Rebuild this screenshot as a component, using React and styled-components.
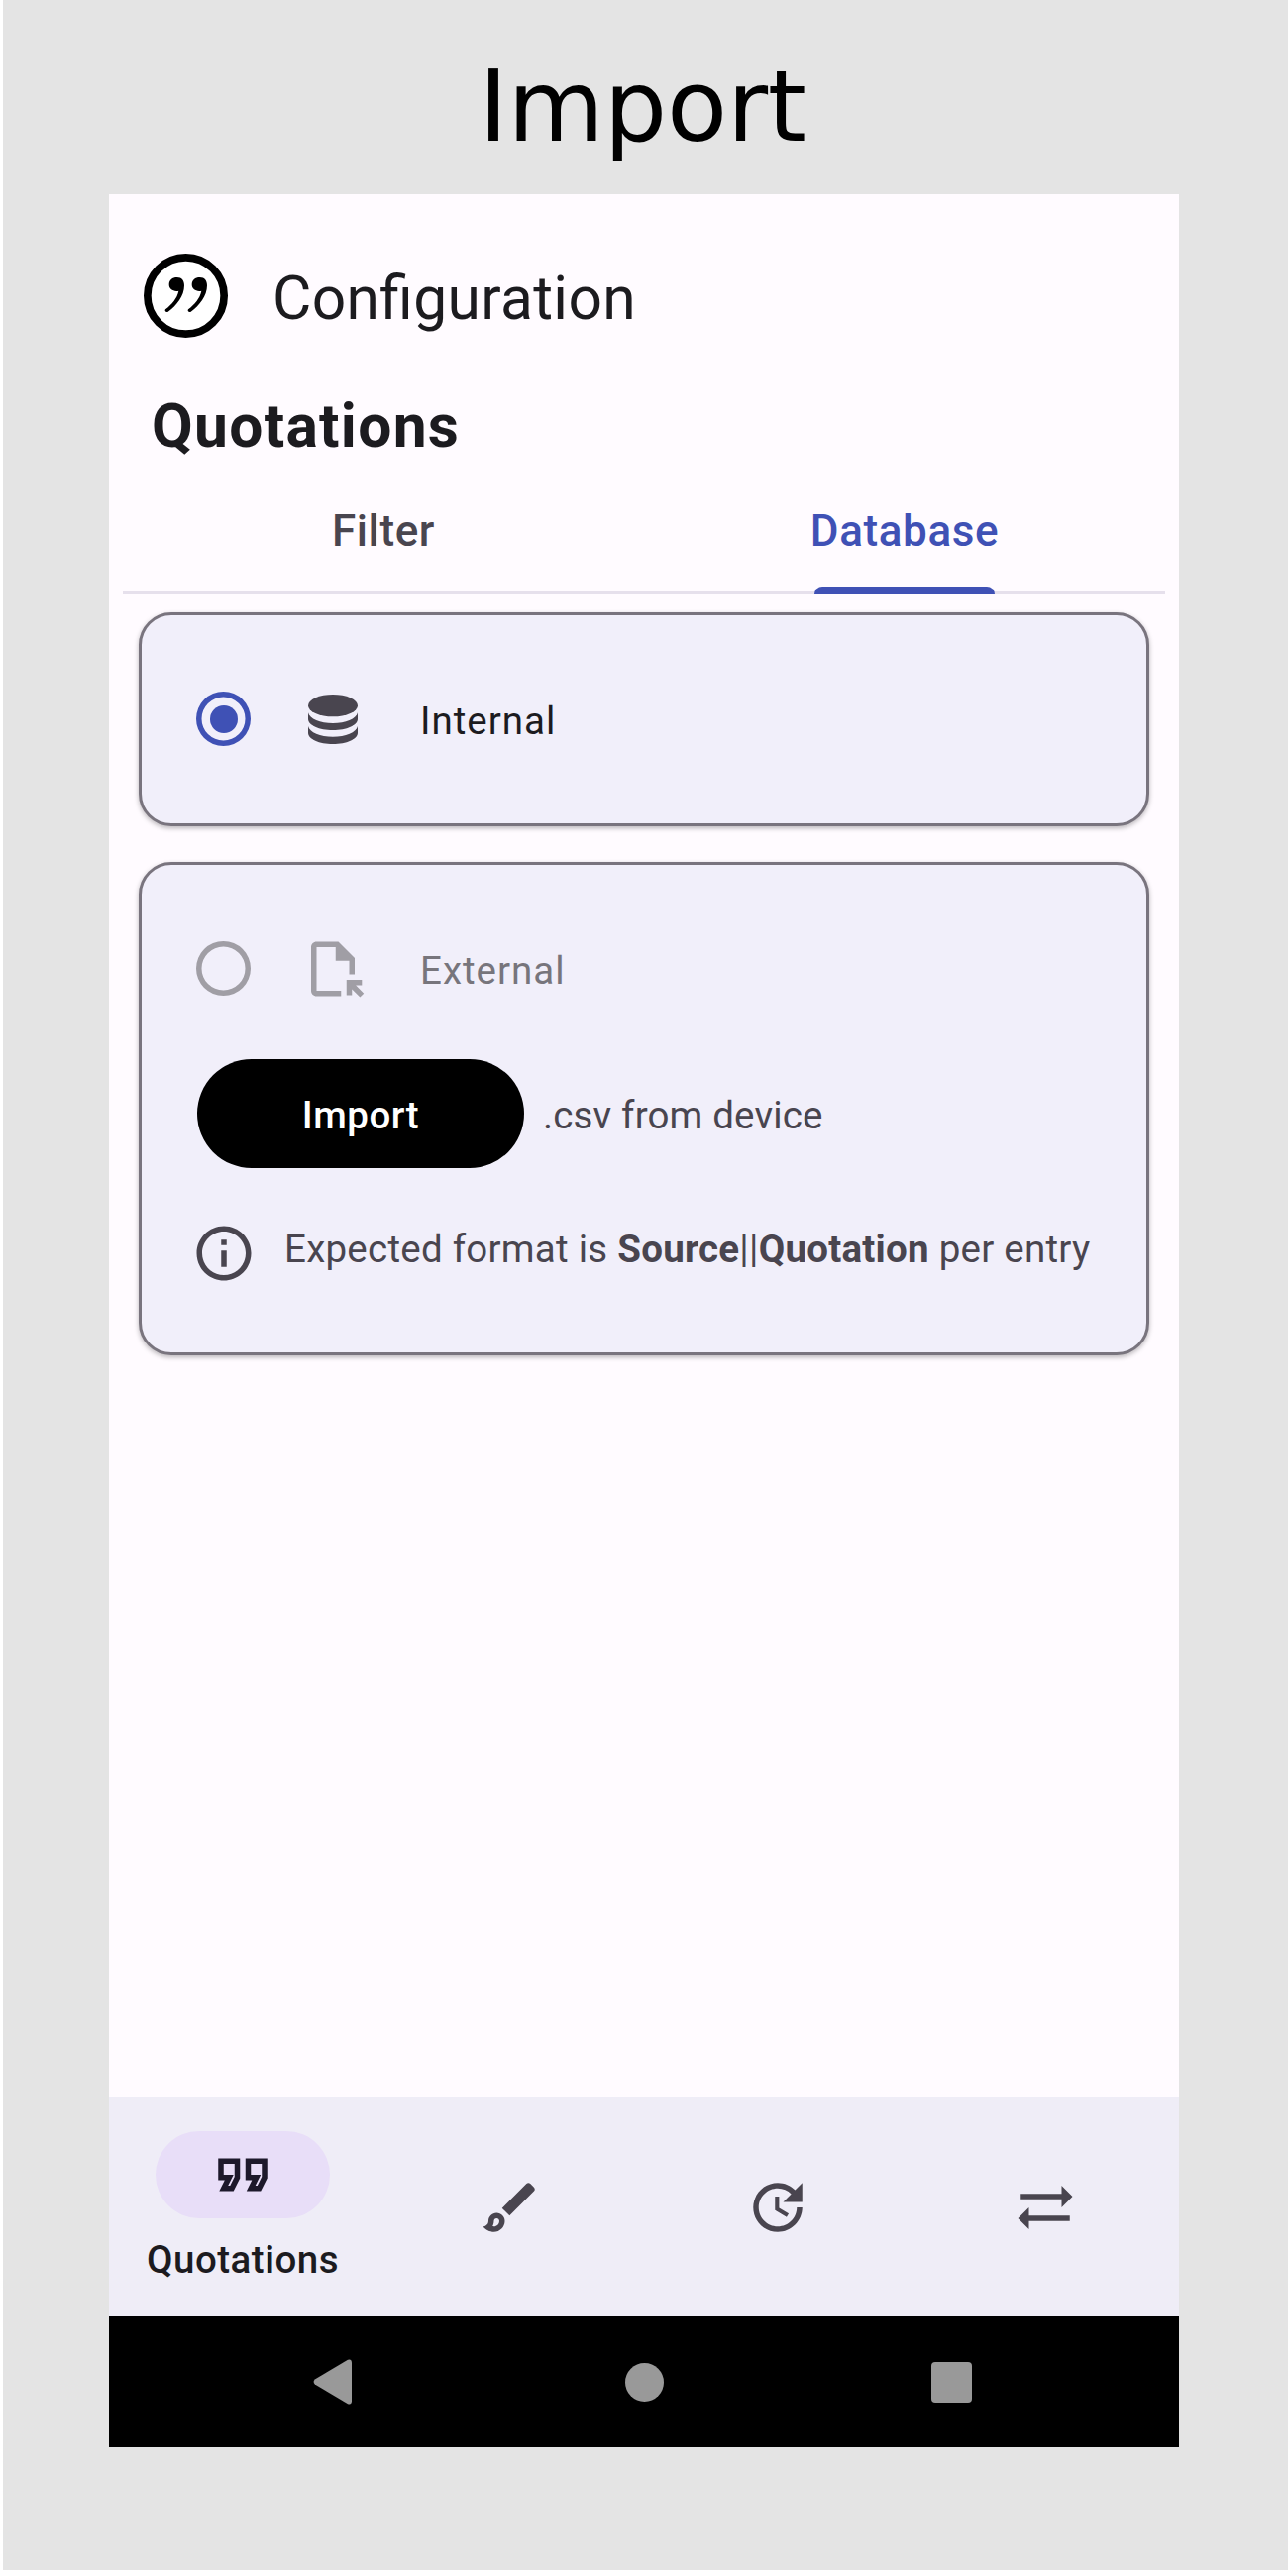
import React from "react";
import styled, { createGlobalStyle } from "styled-components";

const Global = createGlobalStyle`
  * { box-sizing: border-box; }
  body { margin: 0; background: #fff; font-family: Roboto, "Noto Sans", sans-serif; }
`;

const Page = styled.div`
  width: 1297px;
  height: 2594px;
  margin-left: 3px;
  padding-left: 107px;
  background: #e4e4e4;
`;

const Title = styled.h1`
  margin: 0;
  width: 1080px;
  height: 196px;
  padding: 50px 3px 0 0;
  font: 400 100px/116px "DejaVu Sans", sans-serif;
  letter-spacing: -0.2px;
  text-align: center;
  color: #000;
`;

const Phone = styled.main`
  display: flex;
  flex-direction: column;
  width: 1080px;
  height: 2274px;
  background: #fffbff;
  color: #1c1b1f;
`;

const Header = styled.header`
  display: flex;
  align-items: center;
  gap: 45px;
  height: 198px;
  padding: 7px 0 0 35px;
`;

const HeaderTitle = styled.div`
  padding-top: 6px;
  font-size: 60.5px;
  line-height: 72px;
  letter-spacing: 0.35px;
  font-feature-settings: "liga" 1;
`;

const SectionTitle = styled.h2`
  margin: 1px 0 1px 43px;
  font-size: 60.5px;
  line-height: 72px;
  font-weight: 700;
  letter-spacing: 1.3px;
`;

const Tabs = styled.div`
  display: flex;
  height: 132px;
  margin: 0 14px;
  border-bottom: 3px solid #e6e0ec;
`;

const Tab = styled.div`
  flex: 1;
  display: flex;
  flex-direction: column;
  align-items: center;
  height: 132px;
  padding-top: 43px;
  font-size: 44px;
  line-height: 50px;
  font-weight: 500;
  letter-spacing: 0.6px;
  color: ${(p) => (p.$active ? "#3f51b5" : "#49454f")};
`;

const Indicator = styled.span`
  width: 182px;
  height: 8px;
  margin-top: auto;
  border-radius: 8px 8px 0 0;
  background: #3f51b5;
`;

const Cards = styled.div`
  flex: 1;
  display: flex;
  flex-direction: column;
  gap: 36px;
  padding: 18px 30px 0;
`;

const Card = styled.section`
  height: ${(p) => p.$height}px;
  padding: 77px 55px 0;
  border: 3px solid #79747e;
  border-radius: 33px;
  background: #f1effa;
  box-shadow: 0 2px 5px rgba(0, 0, 0, 0.28);
`;

const OptionRow = styled.div`
  display: flex;
  align-items: center;
  height: 55px;
  color: ${(p) => (p.$disabled ? "#a09ea5" : "#49454f")};
`;

const Radio = styled.span`
  display: flex;
  align-items: center;
  justify-content: center;
  width: 55px;
  height: 55px;
  border-radius: 50%;
  box-shadow: inset 0 0 0 5.5px ${(p) => (p.$checked ? "#3f51b5" : "#a09ea5")};
  &::after {
    content: "";
    width: 28px;
    height: 28px;
    border-radius: 50%;
    background: ${(p) => (p.$checked ? "#3f51b5" : "transparent")};
  }
`;

const IconSlot = styled.span`
  display: flex;
  justify-content: center;
  width: 66px;
  margin-left: 50px;
`;

const OptionLabel = styled.span`
  margin-left: 55px;
  padding-top: 4px;
  font-size: 38.5px;
  line-height: 46px;
  letter-spacing: 1px;
  color: ${(p) => (p.$disabled ? "#77757c" : "#1c1b1f")};
`;

const ImportRow = styled.div`
  display: flex;
  align-items: center;
  margin: 64px 0 0 1px;
`;

const ImportButton = styled.button`
  width: 330px;
  height: 110px;
  padding: 4px 0 0;
  border: 0;
  border-radius: 55px;
  background: #000;
  color: #fff;
  font: 500 38.5px/46px Roboto, sans-serif;
  letter-spacing: 0.5px;
`;

const Body = styled.span`
  font-size: 38.5px;
  line-height: 46px;
  letter-spacing: 0.25px;
  white-space: nowrap;
  color: #49454f;
`;

const ImportHint = styled(Body)`
  margin-left: 19px;
  padding-top: 4px;
  letter-spacing: 0.15px;
`;

const InfoRow = styled.div`
  display: flex;
  align-items: flex-start;
  gap: 28px;
  margin: 53px 0 0 -5px;
  color: #49454f;
`;

const InfoText = styled(Body)`
  padding-top: 6px;
  b { font-weight: 700; }
`;

const BottomNav = styled.nav`
  display: flex;
  height: 221px;
  background: #efedf7;
`;

const NavItem = styled.div`
  flex: 1;
  display: flex;
  flex-direction: column;
  align-items: center;
  justify-content: center;
  color: #49454f;
`;

const ActivePill = styled.span`
  display: flex;
  align-items: center;
  justify-content: center;
  width: 176px;
  height: 88px;
  border-radius: 44px;
  background: #e8def8;
  color: #1d192b;
`;

const NavLabel = styled.span`
  margin-top: 19px;
  font-size: 38.5px;
  line-height: 46px;
  font-weight: 500;
  letter-spacing: 0.5px;
  color: #1c1b1f;
`;

const SystemBar = styled.footer`
  display: flex;
  align-items: center;
  justify-content: space-between;
  height: 132px;
  padding: 0 209px 0 206px;
  background: #000;
`;

const Svg = styled.svg`
  display: block;
  flex: none;
  fill: currentColor;
`;

const HomeButton = styled(Svg)`
  margin-left: 5px;
`;

const Icon = ({ d }) => (
  <Svg width="66" height="66" viewBox="0 0 24 24">
    <path d={d} />
  </Svg>
);

const icons = {
  file: "M15 22H6c-1.1 0-2-.9-2-2V4c0-1.1.9-2 2-2h8l6 6v6h-2V9h-5V4H6v16h9v2zm4-.34v-2.24l2.95 2.95 1.41-1.41L20.41 18h2.24v-2H17v5.66h2z",
  info: "M11 7h2v2h-2zm0 4h2v6h-2zm1-9C6.48 2 2 6.48 2 12s4.48 10 10 10 10-4.48 10-10S17.52 2 12 2zm0 18c-4.41 0-8-3.59-8-8s3.59-8 8-8 8 3.59 8 8-3.59 8-8 8z",
  quote: "M18.62 18h-5.24l2-4H13V6h8v7.24L18.62 18zm-2-2h.76L19 12.76V8h-4v4h3.62l-2 4zm-8 2H3.38l2-4H3V6h8v7.24L8.62 18zm-2-2h.76L9 12.76V8H5v4h3.62l-2 4z",
  brush: "M7 16c.55 0 1 .45 1 1 0 1.1-.9 2-2 2-.17 0-.33-.02-.5-.05.31-.55.5-1.21.5-1.95 0-.55.45-1 1-1M18.67 3c-.26 0-.51.1-.71.29L9 12.25 11.75 15l8.96-8.96c.39-.39.39-1.02 0-1.41l-1.34-1.34c-.2-.2-.45-.29-.7-.29zM7 14c-1.66 0-3 1.34-3 3 0 1.31-1.16 2-2 2 .92 1.22 2.49 2 4 2 2.21 0 4-1.79 4-4 0-1.66-1.34-3-3-3z",
  update: "M11 8v5l4.25 2.52.77-1.28-3.52-2.09V8H11zm10 2V3l-2.64 2.64C16.74 4.01 14.49 3 12 3c-4.97 0-9 4.03-9 9s4.03 9 9 9 9-4.03 9-9h-2c0 3.86-3.14 7-7 7s-7-3.14-7-7 3.14-7 7-7c1.93 0 3.68.79 4.95 2.05L14 10h7z",
  swap: "M22 8l-4-4v3H3v2h15v3l4-4zM2 16l4 4v-3h15v-2H6v-3l-4 4z",
};

const comma =
  "M92 112C92 98 102 90 116 90C131 90 138 100 138 115C138 146 115 176 89 194C84 198 77 192 81 187C101 171 116 154 121 131C105 134 92 126 92 112Z";

const Logo = () => (
  <Svg width="85" height="85" viewBox="15 18 255 255">
    <circle cx="142.5" cy="145.5" r="116" fill="#fff" stroke="#000" strokeWidth="23" />
    <path fill="#000" d={comma} />
    <path fill="#000" d={comma} transform="translate(69 0)" />
  </Svg>
);

const DatabaseIcon = () => (
  <Svg width="50" height="50" viewBox="33 33 150 150">
    <ellipse cx="108" cy="66.500" rx="75" ry="33.500" />
    <path d="M33 88C37 107 70 120 108 120S179 107 183 88V107C183 126 149 141 108 141S33 126 33 107Z" />
    <path d="M33 129C37 148 70 161 108 161S179 148 183 129V149C183 168 149 183 108 183S33 168 33 149Z" />
  </Svg>
);

export default function App() {
  return (
    <>
      <Global />
      <Page>
        <Title>Import</Title>
        <Phone>
          <Header>
            <Logo />
            <HeaderTitle>Configuration</HeaderTitle>
          </Header>
          <SectionTitle>Quotations</SectionTitle>
          <Tabs>
            <Tab>Filter</Tab>
            <Tab $active>
              Database
              <Indicator />
            </Tab>
          </Tabs>
          <Cards>
            <Card $height={216}>
              <OptionRow>
                <Radio $checked />
                <IconSlot><DatabaseIcon /></IconSlot>
                <OptionLabel>Internal</OptionLabel>
              </OptionRow>
            </Card>
            <Card $height={498}>
              <OptionRow $disabled>
                <Radio />
                <IconSlot><Icon d={icons.file} /></IconSlot>
                <OptionLabel $disabled>External</OptionLabel>
              </OptionRow>
              <ImportRow>
                <ImportButton>Import</ImportButton>
                <ImportHint>.csv from device</ImportHint>
              </ImportRow>
              <InfoRow>
                <Icon d={icons.info} />
                <InfoText>
                  Expected format is <b>Source</b>||<b>Quotation</b> per entry
                </InfoText>
              </InfoRow>
            </Card>
          </Cards>
          <BottomNav>
            <NavItem>
              <ActivePill><Icon d={icons.quote} /></ActivePill>
              <NavLabel>Quotations</NavLabel>
            </NavItem>
            <NavItem><Icon d={icons.brush} /></NavItem>
            <NavItem><Icon d={icons.update} /></NavItem>
            <NavItem><Icon d={icons.swap} /></NavItem>
          </BottomNav>
          <SystemBar>
            <Svg width="39" height="46" viewBox="0 0 39 46" color="#999">
              <path d="M35 .8L1.800 20.500Q-.6 23 1.800 25.500L35 45.200Q38.700 46.500 39 42.500V3.500Q38.700-.5 35 .8Z" />
            </Svg>
            <HomeButton width="39" height="39" viewBox="0 0 39 39" color="#999">
              <circle cx="19.500" cy="19.500" r="19.500" />
            </HomeButton>
            <Svg width="41" height="41" viewBox="0 0 41 41" color="#999">
              <rect width="41" height="41" rx="4" />
            </Svg>
          </SystemBar>
        </Phone>
      </Page>
    </>
  );
}
